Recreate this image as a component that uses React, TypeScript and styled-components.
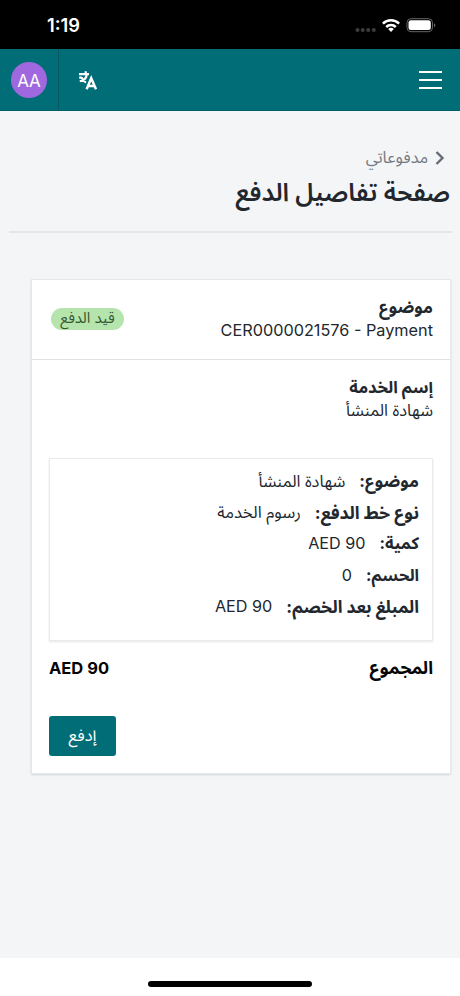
import React from 'react';
import styled, { createGlobalStyle } from 'styled-components';

const Global = createGlobalStyle`
  * { box-sizing: border-box; }
  body {
    margin: 0;
    background: #fff;
    color: #22272e;
    font-family: Inter, "Noto Sans Arabic", sans-serif;
    font-size: 16px;
    overflow: hidden;
  }
`;

const Screen = styled.div`
  width: 460px;
  height: 996px;
  display: flex;
  flex-direction: column;
`;

const StatusBar = styled.div`
  height: 49px;
  background: #000;
  color: #fff;
  display: flex;
  justify-content: space-between;
  padding: 0 23px 0 47px;
`;

const Clock = styled.div`
  font-size: 18.3px;
  font-weight: 600;
  line-height: 51px;
`;

const StatusIcons = styled.svg`
  width: 82px;
  height: 49px;
`;

const NavBar = styled.header`
  height: 62px;
  background: #006d77;
  border-bottom: 1px solid #00616b;
  display: flex;
  align-items: stretch;
`;

const AvatarCell = styled.div`
  width: 59px;
  border-right: 1px solid #075760;
  display: flex;
  align-items: center;
  justify-content: center;
`;

const Avatar = styled.div`
  width: 36px;
  height: 36px;
  border-radius: 50%;
  background: #9f68df;
  color: #fff;
  font-size: 17px;
  line-height: 38px;
  text-align: center;
`;

const Language = styled.div`
  flex: 1;
  color: #fff;
  padding: 21px 0 0 19px;
`;

const Menu = styled.div`
  width: 23px;
  margin-right: 18px;
  display: flex;
  flex-direction: column;
  gap: 6px;
  padding-top: 22px;
`;

const MenuLine = styled.span`
  height: 2px;
  background: #fff;
`;

const Page = styled.main`
  height: 847px;
  background: #f3f5f7;
  direction: rtl;
  padding: 35px 9px 0;
`;

const Heading = styled.div`
  height: 87px;
  margin-right: -1px;
  border-bottom: 2px solid #e3e6e8;
  padding-right: 2px;
`;

const Crumb = styled.div`
  height: 23px;
  display: flex;
  align-items: center;
  gap: 7px;
  color: #747a82;
  padding-right: 5px;
`;

const Text = styled.span<{ $size?: number; $bold?: boolean }>`
  font-size: ${(p) => p.$size ?? 16}px;
  font-weight: ${(p) => (p.$bold ? 700 : 400)};
  white-space: nowrap;
`;

const Title = styled.h1`
  margin: 0;
  height: 46px;
  line-height: 46px;
  font-size: 25.1px;
  font-weight: 600;
  white-space: nowrap;
`;

const Card = styled.section`
  width: 420px;
  height: 495px;
  margin: 46px 0 0;
  background: #fff;
  border: 1px solid #e5e8eb;
  box-shadow: 0 1px 2px rgba(0, 0, 0, 0.12);
`;

const CardHead = styled.div`
  height: 80px;
  border-bottom: 1px solid #dfe2e5;
  padding: 16px 17px 0 19px;
  display: flex;
  justify-content: space-between;
  align-items: flex-start;
`;

const Stack = styled.div`
  display: flex;
  flex-direction: column;
  line-height: 22.5px;
  & > span { height: 22.5px; }
`;

const Badge = styled.div`
  width: 73px;
  height: 22px;
  margin-top: 12px;
  border-radius: 11px;
  background: #b5e5ad;
  color: #35582f;
  text-align: center;
  line-height: 18px;
`;

const CardBody = styled.div`
  padding: 16px 17px 0;
`;

const Details = styled.div`
  height: 183px;
  margin-top: 37px;
  border: 1px solid #e9ebed;
  box-shadow: 0 1px 2px rgba(0, 0, 0, 0.1);
  padding: 7px 13px;
`;

const DetailRow = styled.div`
  height: 31.2px;
  display: flex;
  align-items: center;
  gap: 14px;
  line-height: 31px;
`;

const Total = styled.div`
  height: 30px;
  margin-top: 12px;
  color: #050505;
  display: flex;
  justify-content: space-between;
  align-items: center;
  line-height: 30px;
`;

const PayButton = styled.button`
  display: block;
  width: 67px;
  height: 40px;
  margin: 33px auto 0 0;
  padding: 0 0 2px;
  border: 0;
  border-radius: 3px;
  background: #006d77;
  color: #fff;
  font: inherit;
  font-size: 16.5px;
  line-height: 36px;
`;

const HomeArea = styled.footer`
  height: 38px;
  display: flex;
  justify-content: center;
  padding-top: 23px;
`;

const HomeBar = styled.div`
  width: 164px;
  height: 6px;
  border-radius: 3px;
  background: #000;
`;

const details = [
  { label: 'موضوع:', value: 'شهادة المنشأ', labelSize: 17, valueSize: 16.4 },
  { label: 'نوع خط الدفع:', value: 'رسوم الخدمة', labelSize: 17.6, valueSize: 16.6 },
  { label: 'كمية:', value: 'AED 90', labelSize: 16.6, valueSize: 16.2 },
  { label: 'الحسم:', value: '0', labelSize: 16.4, valueSize: 16.2 },
  { label: 'المبلغ بعد الخصم:', value: 'AED 90', labelSize: 17.4, valueSize: 16.2 },
];

export default function App() {
  return (
    <Screen>
      <Global />
      <StatusBar>
        <Clock>1:19</Clock>
        <StatusIcons viewBox="355 0 82 49">
          <g fill="#3c3c3c">
            <circle cx="357.5" cy="30" r="2" />
            <circle cx="362.7" cy="30" r="2" />
            <circle cx="368.2" cy="30" r="2" />
            <circle cx="373.8" cy="30" r="2" />
          </g>
          <g fill="none" stroke="#fff" strokeWidth="2.5">
            <path d="M382.9 23.6a11.5 11.5 0 0 1 16.2 0" />
            <path d="M386.2 27a6.8 6.8 0 0 1 9.6 0" />
          </g>
          <path d="M388.2 29.1a4 4 0 0 1 5.6 0L391 32z" fill="#fff" />
          <rect x="407" y="18.7" width="25.5" height="13" rx="4" fill="none" stroke="#666" />
          <rect x="408.5" y="20.3" width="22.3" height="9.8" rx="2.5" fill="#fff" />
          <path d="M434 23.2c1.8.6 1.8 3.4 0 4z" fill="#666" />
        </StatusIcons>
      </StatusBar>
      <NavBar>
        <AvatarCell>
          <Avatar>AA</Avatar>
        </AvatarCell>
        <Language>
          <svg width="20" height="20" viewBox="0 0 20 20" fill="none" stroke="currentColor" strokeWidth="2.2">
            <path d="M1 4.2h10M7.7 1.2v3M8.8 4.4C8.4 8.4 6 10.6 1.8 11.2M1.2 7.6h2.6M3.6 7.4c.8 2.6 2.4 4 4.4 5" />
            <path d="M8.6 19.2L13.2 8.2l4.8 11M10.3 15.9h6.3" strokeWidth="2.5" />
          </svg>
        </Language>
        <Menu>
          <MenuLine />
          <MenuLine />
          <MenuLine />
        </Menu>
      </NavBar>
      <Page>
        <Heading>
          <Crumb>
            <svg width="10" height="14" viewBox="0 0 10 14" fill="none" stroke="#666c73" strokeWidth="2.4">
              <path d="M1.5 1l6 6-6 6" />
            </svg>
            <Text $size={16.4}>مدفوعاتي</Text>
          </Crumb>
          <Title>صفحة تفاصيل الدفع</Title>
        </Heading>
        <Card>
          <CardHead>
            <Stack>
              <Text $bold $size={17}>موضوع</Text>
              <Text $size={16.25} dir="ltr">CER0000021576 - Payment</Text>
            </Stack>
            <Badge>
              <Text $size={15}>قيد الدفع</Text>
            </Badge>
          </CardHead>
          <CardBody>
            <Stack>
              <Text $bold $size={16.6}>إسم الخدمة</Text>
              <Text $size={16.4}>شهادة المنشأ</Text>
            </Stack>
            <Details>
              {details.map((d) => (
                <DetailRow key={d.label}>
                  <Text $bold $size={d.labelSize}>{d.label}</Text>
                  <Text $size={d.valueSize} dir="auto">{d.value}</Text>
                </DetailRow>
              ))}
            </Details>
            <Total>
              <Text $bold $size={17.8}>المجموع</Text>
              <Text $bold $size={16.5} dir="ltr">AED 90</Text>
            </Total>
            <PayButton>إدفع</PayButton>
          </CardBody>
        </Card>
      </Page>
      <HomeArea>
        <HomeBar />
      </HomeArea>
    </Screen>
  );
}
